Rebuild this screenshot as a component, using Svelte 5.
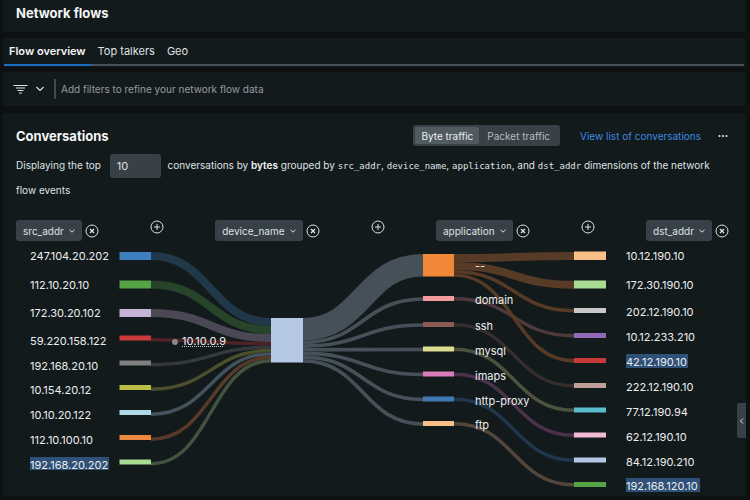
<script>
  const tabs = ['Flow overview', 'Top talkers', 'Geo'];
  const fields = ['src_addr', 'device_name', 'application', 'dst_addr'];

  let activeTab = $state('Flow overview');
  let metric = $state('Byte traffic');
  let filter = $state('');
  let top = $state(10);

  const NODE_WIDTH = 32;
  const THIN = 3.4;
  const COLUMNS = { src: 116, device: 268, app: 420, dst: 571 };

  const sources = [
    { label: '247.104.20.202', y: 7, h: 8, color: '#3f7fbf', link: '#21384a' },
    { label: '112.10.20.10', y: 35.5, h: 8, color: '#54a344', link: '#27432a' },
    { label: '172.30.20.102', y: 64, h: 8, color: '#c6b3d8', link: '#4a4855' },
    { label: '59.220.158.122', y: 90.5, h: 5, color: '#c93a3a', link: '#4d2226' },
    { label: '192.168.20.10', y: 115.5, h: 5, color: '#808080', link: '#35393b' },
    { label: '10.154.20.12', y: 140, h: 5, color: '#bdbe48', link: '#4b4f2c' },
    { label: '10.10.20.122', y: 165, h: 5, color: '#add9e6', link: '#43535d' },
    { label: '112.10.100.10', y: 190, h: 5, color: '#ed8840', link: '#573a29' },
    { label: '192.168.20.202', y: 214.5, h: 5, color: '#a9dc93', link: '#40543f', mark: 79 }
  ];

  const apps = [
    { label: '--', y: 9, h: 22.5, color: '#f08838', link: '#573b26', text: 25 },
    { label: 'domain', y: 51, h: 5, color: '#f09c9c', link: '#50393d' },
    { label: 'ssh', y: 77, h: 5, color: '#8b5c54', link: '#352e2e' },
    { label: 'mysql', y: 101.5, h: 5, color: '#dbdc90', link: '#4b523e' },
    { label: 'imaps', y: 126.5, h: 5, color: '#d87dba', link: '#4a324a' },
    { label: 'http-proxy', y: 151.5, h: 5, color: '#4079b3', link: '#20364a' },
    { label: 'ftp', y: 176, h: 5, color: '#f8c086', link: '#51463b' }
  ];

  const targets = [
    { label: '10.12.190.10', y: 6.5, h: 8.5, color: '#f8c086', from: 0 },
    { label: '172.30.190.10', y: 35.5, h: 8, color: '#a9dc93', from: 0 },
    { label: '202.12.190.10', y: 63, h: 5, color: '#c9c9c9', from: 0 },
    { label: '10.12.233.210', y: 88, h: 5, color: '#9169b8', from: 1 },
    { label: '42.12.190.10', y: 113, h: 5, color: '#c93a3a', from: 0, mark: 62 },
    { label: '222.12.190.10', y: 138, h: 5, color: '#bf9f97', from: 2 },
    { label: '77.12.190.94', y: 162.5, h: 5, color: '#5bbcca', from: 3 },
    { label: '62.12.190.10', y: 187.5, h: 5, color: '#f1bad4', from: 4 },
    { label: '84.12.190.210', y: 212.5, h: 5, color: '#b4c8e6', from: 5 },
    { label: '192.168.120.10', y: 237, h: 5, color: '#54a344', from: 6, mark: 74 }
  ];

  const curve = (x0, y0, x1, y1) => {
    const mid = (x0 + x1) / 2;
    return `M${x0} ${y0}C${mid} ${y0} ${mid} ${y1} ${x1} ${y1}`;
  };

  const links = [];
  let offset = 73;
  for (const s of sources) {
    const w = s.h > 5 ? s.h : THIN;
    const start = s.h > 5 ? s.y + s.h / 2 : s.y + 4.2;
    links.push({
      d: curve(COLUMNS.src + NODE_WIDTH, start, COLUMNS.device, offset + w / 2),
      w,
      color: s.link
    });
    offset += w;
  }
  offset = 73;
  for (const a of apps) {
    const w = a.h > 5 ? a.h : 3.7;
    links.push({
      d: curve(COLUMNS.device + NODE_WIDTH, offset + w / 2, COLUMNS.app, a.y + a.h / 2 + (a.h > 5 ? 0 : 0.5)),
      w,
      color: '#455059'
    });
    offset += w;
  }
  const used = apps.map(() => 0);
  for (const t of targets) {
    const app = apps[t.from];
    const w = t.h > 5 ? 8 : THIN;
    const inset = t.from === 0 ? 0 : 1;
    links.push({
      d: curve(COLUMNS.app + NODE_WIDTH - 1, app.y + inset + used[t.from] + w / 2, COLUMNS.dst, t.y + t.h / 2 + 0.3),
      w,
      color: app.link
    });
    used[t.from] += w;
  }
</script>

{#snippet chevron()}
  <svg class="chevron" viewBox="0 0 8 8" aria-hidden="true"><path d="M1.5 2.8 4 5.2 6.5 2.8" /></svg>
{/snippet}

<div class="page">
  <header class="card title"><h1>Network flows</h1></header>

  <div class="card tabs" role="tablist">
    {#each tabs as tab}
      <button role="tab" aria-selected={activeTab === tab} class:active={activeTab === tab} onclick={() => (activeTab = tab)}>{tab}</button>
    {/each}
  </div>

  <div class="card filters">
    <button class="filter-menu" aria-label="Filter options">
      <svg width="15" height="11" viewBox="0 0 15 11" aria-hidden="true"><path d="M.5 1.5h14M3 4h9M4.5 6.500h6M6 9h3" /></svg>
      <svg width="10" height="8" viewBox="0 0 10 8" aria-hidden="true"><path d="M1.500 2 5 5.500 8.500 2" /></svg>
    </button>
    <input type="text" aria-label="Filters" placeholder="Add filters to refine your network flow data" bind:value={filter} />
  </div>

  <main class="card conversations">
    <div class="heading">
      <h2>Conversations</h2>
      <div class="toggle">
        {#each ['Byte traffic', 'Packet traffic'] as name}
          <button aria-pressed={metric === name} class:on={metric === name} onclick={() => (metric = name)}>{name}</button>
        {/each}
      </div>
      <a href="#conversations">View list of conversations</a>
      <button class="more" aria-label="More actions">
        <svg width="10" height="4" viewBox="0 0 10 4" aria-hidden="true"><circle cx="1.500" cy="2" r="1.100" /><circle cx="5" cy="2" r="1.100" /><circle cx="8.500" cy="2" r="1.100" /></svg>
      </button>
    </div>

    <p class="summary">
      <label for="top">Displaying the top</label>
      <input id="top" type="number" bind:value={top} />
      conversations by <strong>bytes</strong> grouped by <code>src_addr</code>, <code>device_name</code>, <code>application</code>, and <code>dst_addr</code> <span>dimensions of the network</span> <span>flow events</span>
    </p>

    <div class="dimensions">
      {#each fields as field, i}
        {#if i > 0}
          <button class="round" aria-label="Add dimension">
            <svg viewBox="0 0 14 14" aria-hidden="true"><circle cx="7" cy="7" r="6" /><path d="M7 4v6M4 7h6" /></svg>
          </button>
        {/if}
        <div class="dimension">
          <div class="pill">
            <select aria-label="Dimension {i + 1}" value={field}>
              {#each fields as option}<option>{option}</option>{/each}
            </select>
            {@render chevron()}
          </div>
          <button class="round" aria-label="Remove {field}">
            <svg viewBox="0 0 14 14" aria-hidden="true"><circle cx="7" cy="7" r="6" /><path class="bold" d="m5 5 4 4M9 5 5 9" /></svg>
          </button>
        </div>
      {/each}
    </div>

    <svg class="sankey" viewBox="0 0 743 251" role="img" aria-label="Network conversations">
      {#each links as link}
        <path d={link.d} stroke={link.color} stroke-width={link.w} fill="none" />
      {/each}

      {#each sources as n}
        <rect x={COLUMNS.src + 0.5} y={n.y} width="31.5" height={n.h} fill={n.color} />
        {#if n.mark}<rect class="mark" x="27" y={n.y - 2.500} width={n.mark} height="13" />{/if}
        <text x="27" y={n.y + (n.h > 5 ? 8 : 9)}>{n.label}</text>
      {/each}

      <rect x={COLUMNS.device} y="73" width={NODE_WIDTH} height="44.500" fill="#b4c8e6" />
      <circle cx="172" cy="97" r="3" fill="#858788" />
      <text x="179" y="100">10.10.0.9</text>
      <path class="dots" d="M179 101.500h42" />

      {#each apps as n}
        <rect x={COLUMNS.app} y={n.y} width="31" height={n.h} fill={n.color} />
        <text x="472" y={n.text ?? n.y + 8}>{n.label}</text>
      {/each}

      {#each targets as n}
        <rect x={COLUMNS.dst} y={n.y} width={NODE_WIDTH} height={n.h} fill={n.color} />
        {#if n.mark}<rect class="mark" x="623" y={n.y - 4} width={n.mark} height="14" />{/if}
        <text x="623" y={n.y + 8}>{n.label}</text>
      {/each}
    </svg>

    <button class="expand" aria-label="Expand panel">
      <svg width="6" height="8" viewBox="0 0 6 8" aria-hidden="true"><path d="M4 1.500 1.500 4 4 6.500" /></svg>
    </button>
  </main>
</div>

<style>
  :global(body) {
    background: #0d1111;
  }

  .page,
  .page button,
  .page input,
  .page select {
    font-family: Inter, 'Liberation Sans', sans-serif;
    font-size: 10px;
    color: #dfe2e3;
  }

  .page {
    min-height: 100vh;
    box-sizing: border-box;
    padding: 0 4px 4px 3px;
    background: #0d1111;
  }

  .page button {
    border: 0;
    padding: 0;
    background: none;
    cursor: pointer;
  }

  svg {
    display: block;
    fill: none;
    stroke: currentColor;
  }

  h1,
  h2 {
    margin: 0;
    font-size: 13px;
    font-weight: 700;
    line-height: 20px;
    color: #f3f5f5;
  }

  .card {
    background: #131a1c;
    border-radius: 3px;
  }

  .title {
    padding: 3px 13px 9px;
    margin-bottom: 6px;
    border-radius: 0 0 3px 3px;
  }

  .tabs {
    display: flex;
    gap: 2px;
    box-sizing: border-box;
    height: 29px;
    margin-bottom: 5px;
    padding: 0 1px;
    background: linear-gradient(#475057, #475057) 1px 26px / calc(100% - 3px) 2px no-repeat #131a1c;
  }

  .page .tabs button {
    height: 28px;
    padding: 0 5px;
    border-bottom: 2px solid transparent;
    font-size: 11px;
  }

  .page .tabs button.active {
    font-weight: 600;
    color: #f3f5f5;
    border-bottom-color: #1b6ac4;
  }

  .filters {
    display: flex;
    align-items: center;
    height: 34px;
    margin-bottom: 7px;
    padding: 0 10px;
  }

  .page .filter-menu {
    display: flex;
    align-items: center;
    gap: 7px;
    padding-right: 9px;
  }

  .filter-menu svg {
    stroke-width: 1.2;
  }

  .filters input {
    flex: 1;
    height: 20px;
    padding: 0 5px;
    border: 0;
    border-left: 2px solid #43494c;
    background: none;
    outline: 0;
  }

  .filters input::placeholder {
    color: #969c9f;
    opacity: 1;
  }

  .conversations {
    position: relative;
    padding-top: 12px;
  }

  .heading {
    display: flex;
    align-items: center;
    height: 21px;
    padding: 0 18px 0 13px;
  }

  .toggle {
    display: flex;
    margin-left: auto;
    padding: 2px;
    border-radius: 3px;
    background: #384147;
  }

  .page .toggle button {
    height: 17px;
    padding: 0 8px;
    border-radius: 2px;
    color: #b6bcc0;
  }

  .page .toggle button.on {
    padding: 0 6px;
    background: #505a61;
    color: #eceeef;
  }

  .heading a {
    margin: 0 17px 0 20px;
    color: #3c8ae0;
    text-decoration: none;
  }

  .more svg {
    fill: #dfe2e3;
    stroke: none;
  }

  .summary {
    margin: 7px 22px 18px 13px;
    line-height: 24px;
  }

  .summary span {
    white-space: nowrap;
  }

  .page .summary input {
    box-sizing: border-box;
    width: 51px;
    height: 24px;
    margin: -2px 4px -2px 6px;
    padding: 0 7px;
    border: 0;
    border-radius: 3px;
    background: #384147;
    font-size: 11px;
    appearance: textfield;
    vertical-align: middle;
  }

  .summary input::-webkit-inner-spin-button {
    appearance: none;
  }

  .summary strong {
    font-weight: 600;
    color: #f3f5f5;
  }

  code {
    font-family: 'DejaVu Sans Mono', monospace;
    font-size: 9px;
  }

  .dimensions {
    display: flex;
    justify-content: space-between;
    align-items: flex-start;
    padding: 0 17px 0 13px;
  }

  .dimension {
    display: flex;
    align-items: center;
    gap: 3px;
  }

  .pill {
    display: flex;
    align-items: center;
    height: 21px;
    border-radius: 3px;
    background: #384147;
  }

  .pill select {
    appearance: none;
    field-sizing: content;
    height: 21px;
    margin-right: -16px;
    padding: 0 20px 0 7px;
    border: 0;
    background: none;
    outline: 0;
  }

  .chevron {
    width: 8px;
    height: 8px;
    margin-right: 6px;
    pointer-events: none;
  }

  .round svg {
    width: 14px;
    height: 14px;
  }

  .round .bold {
    stroke-width: 1.4;
  }

  .sankey {
    width: 100%;
    height: auto;
    margin-top: 4px;
    stroke: none;
  }

  .sankey text {
    font-size: 11px;
    fill: #eceeef;
  }

  .mark {
    fill: #2f5078;
  }

  .dots {
    stroke: #c9cccd;
    stroke-dasharray: 1 1;
  }

  .page .expand {
    position: absolute;
    right: 0;
    bottom: 58px;
    display: grid;
    place-items: center;
    width: 9px;
    height: 35px;
    border-radius: 2px 0 0 2px;
    background: #384147;
  }
</style>
